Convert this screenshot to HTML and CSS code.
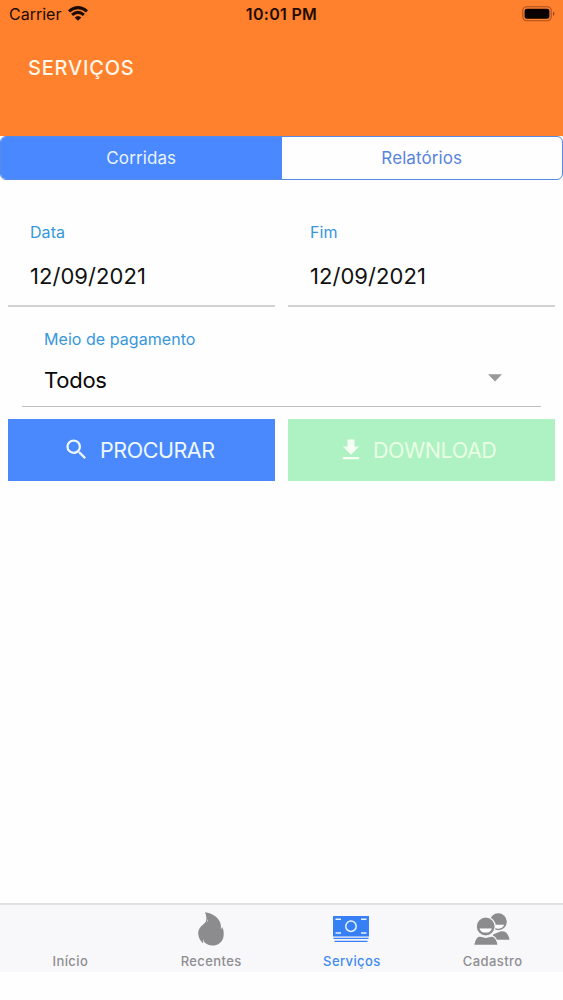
FILE: index.html
```html
<!DOCTYPE html>
<html lang="pt-BR">
<head>
<meta charset="utf-8">
<title>Serviços</title>
<link rel="stylesheet" href="styles.css">
</head>
<body>
<div class="screen">
  <header class="header">
    <div class="status">
      <div class="carrier"><span class="carrier-name">Carrier</span>
        <svg class="wifi" width="20" height="15" viewBox="0 0 20 15"><g fill="none" stroke="#1d0b02" stroke-width="3"><path d="M1 5.300Q10-2 19 5.300"/><path d="M4.100 8.900Q10 3.800 15.900 8.900"/></g><path d="M6.600 11.500Q10 8.500 13.400 11.500L10 14.800Z" fill="#1d0b02"/></svg>
      </div>
      <span class="time">10:01 PM</span>
      <svg class="battery" width="33" height="16" viewBox="0 0 33 16"><rect x=".8" y=".8" width="28.4" height="13.9" rx="4" fill="none" stroke="#a65021" stroke-width="1.1"/><rect x="2.6" y="2.7" width="24.8" height="10.1" rx="2.3" fill="#080200"/><path d="M31 5.6Q34 7.8 31 10Z" fill="#8f431a"/></svg>
    </div>
    <h1 class="title">SERVIÇOS</h1>
  </header>
  <nav class="segments">
    <div class="segment segment-on"><span>Corridas</span></div>
    <div class="segment"><span>Relatórios</span></div>
  </nav>
  <main class="form">
    <div class="row dates">
      <div class="field"><label class="label">Data</label><div class="value">12/09/2021</div></div>
      <div class="field"><label class="label">Fim</label><div class="value">12/09/2021</div></div>
    </div>
    <div class="select">
      <label class="label">Meio de pagamento</label>
      <div class="select-line"><span class="todos">Todos</span><svg width="14" height="8" viewBox="0 0 14 8"><path d="M0 .3H14L7 7.5Z" fill="#999"/></svg></div>
    </div>
    <div class="row">
      <button class="button search"><svg width="27" height="27" viewBox="0 0 24 24"><path fill="currentColor" d="M15.500 14h-.790l-.280-.270A6.471 6.471 0 0 0 16 9.500 6.500 6.500 0 1 0 9.500 16c1.610 0 3.090-.590 4.230-1.570l.270.280v.790l5 4.990L20.490 19l-4.990-5zM9.500 14A4.500 4.500 0 1 1 9.500 5a4.500 4.500 0 0 1 0 9z"/></svg><span>PROCURAR</span></button>
      <button class="button download"><svg width="28" height="28" viewBox="0 0 24 24"><path fill="currentColor" d="M19 9h-4V3H9v6H5l7 7 7-7zM5 18v2h14v-2H5z"/></svg><span>DOWNLOAD</span></button>
    </div>
  </main>
  <nav class="tabs">
    <div class="tab"><div class="icon"></div><span>Início</span></div>
    <div class="tab"><div class="icon"><svg width="26" height="34" viewBox="0 0 26 34"><path fill="#8c8b8e" d="M7 .2C14 .8 22 5.800 22.900 13.200C23.100 15 22.700 16.400 23 17.200C23.500 16.700 23.900 15.700 24 14.800C25.500 17 26 20.500 25.600 24C24.900 30 20 33.600 14.100 33.600C11.600 33.600 8.900 32.700 6.600 30.600C5.800 29.900 5.600 28.500 5.900 27.200C5.100 28.300 4.900 29.500 5.200 31.400C2 29 .2 24.800 .2 21.500C.2 15 5.600 13 7.700 9.800C8.900 7.800 8.500 3.400 7 .2Z"/><path fill="#f7f6f9" d="M9.600 6.500Q10.400 8.600 8.900 10.600Q9.500 8.600 9.600 6.500Z"/></svg></div><span>Recentes</span></div>
    <div class="tab tab-on"><div class="icon"><svg width="36" height="27" viewBox="0 0 36 27"><path fill="#367ff4" d="M0 0H36V20.500H0ZM.5 21.700H35.500V23.100H.5ZM1.500 24.700H34.500V26H1.500Z"/><g fill="none" stroke="#e9f3ff" stroke-width="1.500"><circle cx="18" cy="10.200" r="5.200"/><path d="M2.500 3.300H8M28 3.300H33.500M2.500 17.100H8M28 17.100H33.500"/></g></svg></div><span>Serviços</span></div>
    <div class="tab"><div class="icon"><svg width="36" height="32" viewBox="0 0 36 32"><g fill="#8c8b8e"><circle cx="24.300" cy="8.800" r="8.500"/><path d="M19 26.700V21.500L27 18.200L30.500 18.500C33 19.600 34.600 22.400 35.600 26.700H19Z"/></g><path d="M19 11.700H30.200Q28.700 15.700 23.500 15.700Q20 15 19 11.700Z" fill="#fff"/><g fill="#8c8b8e" stroke="#f7f6f9" stroke-width="1.200"><path d="M-.4 32.300C.6 26.700 2.700 23.300 5.500 22.900L11.800 24.400L18.200 22.900C21.500 24 23.300 27.200 24.200 32.300Z"/><circle cx="11.700" cy="13.500" r="9.500"/></g><path d="M5.500 15.400H17.900Q16.700 19.600 11.700 19.600Q6.700 19.600 5.500 15.400Z" fill="#fff"/></svg></div><span>Cadastro</span></div>
  </nav>
</div>
</body>
</html>
```
FILE: styles.css
```css
* { box-sizing: border-box; }
body { margin: 0; background: #fefefe; font-family: Inter, "Liberation Sans", sans-serif; }
.screen { width: 563px; height: 1000px; display: flex; flex-direction: column; padding-bottom: 28px; }
.header { height: 136px; background: #ff802d; }
.status { height: 29px; padding: 0 8px 0 9px; display: grid; grid-template-columns: 1fr auto 1fr; align-items: center; color: #210c02; }
.carrier { display: flex; align-items: center; gap: 7px; }
.carrier-name { font-size: 16px; line-height: 29px; letter-spacing: 0; }
.wifi { margin-top: -2px; }
.time { font-size: 16px; font-weight: 600; letter-spacing: .3px; margin: -1px 1px 0 0; }
.battery { justify-self: end; margin-top: -1px; }
.title { margin: 24px 0 0 28px; font-size: 20px; line-height: 30px; font-weight: 500; letter-spacing: .8px; color: #fff7e7; }
.segments { display: grid; grid-template-columns: 1fr 1fr; height: 44px; border: 1.500px solid #568ae5; border-radius: 6px; overflow: hidden; }
.segment { display: flex; align-items: center; justify-content: center; color: #5784dd; font-size: 17px; letter-spacing: .1px; padding: 0 0 1px 0; }
.segment-on { background: #4988ff; color: #e9f4ff; }
.form { flex: 1; padding: 0 8px; }
.row { display: grid; grid-template-columns: 267px 267px; gap: 13px; }
.dates { padding-top: 40px; }
.field { height: 87px; padding-left: 22px; border-bottom: 2px solid #d2d2d2; }
.label { display: block; font-size: 16px; line-height: 24px; letter-spacing: .05px; color: #3797dc; }
.value { margin-top: 17px; font-size: 22px; line-height: 30px; color: #111; letter-spacing: .05px; }
.select { height: 100px; margin: 0 14px 12px; padding: 20px 39px 0 22px; border-bottom: 1px solid #bfbfc2; }
.select-line { display: flex; align-items: center; justify-content: space-between; margin-top: 14px; height: 30px; font-size: 22px; color: #080808; }
.todos { letter-spacing: -.25px; }
.select-line svg { margin-top: -4px; }
.button { height: 62px; display: flex; align-items: center; border: 0; padding: 0; font: 400 21.5px Inter, sans-serif; letter-spacing: -.45px; }
.search { background: #4988fd; color: #eef8ff; padding-left: 55px; gap: 10px; }
.download { background: #aef1c2; color: #e8ffe4; padding-left: 49px; gap: 8px; }
.search svg { margin-top: -2px; }
.download svg { color: #f5fff4; }
.tabs { height: 69px; display: grid; grid-template-columns: repeat(4, 1fr); background: #f8f7fa; border-top: 2px solid #e1e0e2; }
.tab { display: flex; flex-direction: column; align-items: center; color: #8f8e91; font-size: 13px; font-weight: 500; line-height: 18px; letter-spacing: .4px; }
.icon { height: 47px; display: flex; align-items: center; padding: 1px 1px 0 0; }
.tab-on { color: #408af0; }
```
